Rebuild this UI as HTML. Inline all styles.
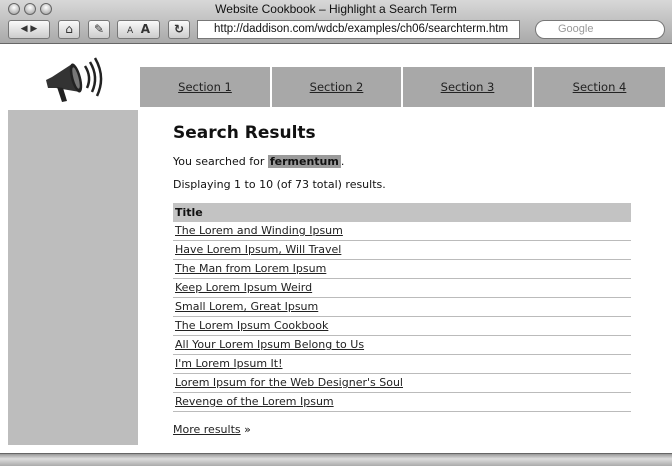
<!DOCTYPE html>
<html><head><style>
*{margin:0;padding:0;box-sizing:border-box}
body{width:672px;height:466px;overflow:hidden;background:#fff;font-family:"DejaVu Sans","Liberation Sans",sans-serif;position:relative;color:#111}
.tb{position:absolute;left:0;top:0;width:672px;height:44px;background:linear-gradient(#d8d8d8,#a9a9a9);border-bottom:1px solid #666}
.title{position:absolute;top:2px;width:100%;text-align:center;font-size:12px;color:#111;font-family:"Liberation Sans",sans-serif}
.dot{position:absolute;top:3px;width:12px;height:12px;border-radius:50%;background:radial-gradient(circle at 50% 35%,#fff,#999);border:1px solid #666}
.btn{position:absolute;top:20px;height:19px;background:linear-gradient(#fafafa,#ccc);border:1px solid #777;border-radius:3px;font-size:12px;text-align:center;line-height:17px;color:#333}
.url{position:absolute;left:197px;top:20px;width:323px;height:19px;background:#fff;border:1px solid #777;font-size:11.5px;line-height:17px;padding-left:16px;font-family:"Liberation Sans",sans-serif}
.search{position:absolute;left:535px;top:20px;width:130px;height:19px;background:#fff;border:1px solid #777;border-radius:10px;font-size:11px;line-height:17px;padding-left:22px;color:#999;font-family:"Liberation Sans",sans-serif}
.nav{position:absolute;top:67px;height:40px;background:#a8a8a8;font-size:11.5px;text-align:center;line-height:40px}
.nav a,a{color:#222;text-decoration:underline}
.side{position:absolute;left:8px;top:110px;width:130px;height:335px;background:#bdbdbd}
.bot{position:absolute;left:0;top:453px;width:672px;height:13px;background:linear-gradient(#999,#ddd 40%,#aaa);border-top:1px solid #666}
.main{position:absolute;left:173px;top:121px;width:458px;font-size:11px}
h1{font-size:17px;font-weight:bold;margin-bottom:12px;margin-top:2px}
p{margin-bottom:10px}
.hl{background:#9a9a9a;font-weight:bold;padding:0 2px}
.th{background:#c3c3c3;font-weight:bold;height:19px;line-height:19px;padding-left:2px}
.r{height:19px;line-height:18px;border-bottom:1px solid #bbb;padding-left:2px}
</style></head><body>
<div class="tb">
<div class="dot" style="left:8px"></div><div class="dot" style="left:24px"></div><div class="dot" style="left:40px"></div>
<div class="title">Website Cookbook – Highlight a Search Term</div>
<div class="btn" style="left:8px;width:42px;font-size:9px">◀ ▶</div>
<div class="btn" style="left:58px;width:22px">⌂</div>
<div class="btn" style="left:88px;width:22px">✎</div>
<div class="btn" style="left:117px;width:43px"><span style="font-size:9px">A</span> &nbsp;<b>A</b></div>
<div class="btn" style="left:168px;width:22px;font-weight:bold">↻</div>
<div class="url">http://daddison.com/wdcb/examples/ch06/searchterm.htm</div>
<div class="search">Google</div>
</div>
<svg style="position:absolute;left:40px;top:56px" width="66" height="48" viewBox="0 0 66 48">
<path d="M6 24 L12 21 L32 8 L40 36 L16 32 L8 32 Z" fill="#333"/>
<ellipse cx="36" cy="22" rx="5" ry="15" fill="#222" transform="rotate(-15 36 22)"/>
<ellipse cx="36" cy="22" rx="2.5" ry="11" fill="#777" transform="rotate(-15 36 22)"/>
<path d="M17 31 L22 46 L27 45 L23 32 Z" fill="#222"/>
<path d="M45 10 Q52 21 47 32" stroke="#222" stroke-width="2.5" fill="none"/>
<path d="M50 6 Q59 21 52 36" stroke="#222" stroke-width="2.5" fill="none"/>
<path d="M55 2 Q66 21 57 40" stroke="#222" stroke-width="2.5" fill="none"/>
</svg>
<div class="nav" style="left:140px;width:130px"><a>Section 1</a></div>
<div class="nav" style="left:272px;width:129px"><a>Section 2</a></div>
<div class="nav" style="left:403px;width:129px"><a>Section 3</a></div>
<div class="nav" style="left:534px;width:131px"><a>Section 4</a></div>
<div class="side"></div>
<div class="main">
<h1>Search Results</h1>
<p>You searched for <span class="hl">fermentum</span>.</p>
<p style="margin-bottom:12px">Displaying 1 to 10 (of 73 total) results.</p>
<div class="th">Title</div>
<div class="r"><a>The Lorem and Winding Ipsum</a></div>
<div class="r"><a>Have Lorem Ipsum, Will Travel</a></div>
<div class="r"><a>The Man from Lorem Ipsum</a></div>
<div class="r"><a>Keep Lorem Ipsum Weird</a></div>
<div class="r"><a>Small Lorem, Great Ipsum</a></div>
<div class="r"><a>The Lorem Ipsum Cookbook</a></div>
<div class="r"><a>All Your Lorem Ipsum Belong to Us</a></div>
<div class="r"><a>I'm Lorem Ipsum It!</a></div>
<div class="r"><a>Lorem Ipsum for the Web Designer's Soul</a></div>
<div class="r"><a>Revenge of the Lorem Ipsum</a></div>
<p style="margin-top:11px"><a>More results</a> »</p>
</div>
<div class="bot"></div>
</body></html>
